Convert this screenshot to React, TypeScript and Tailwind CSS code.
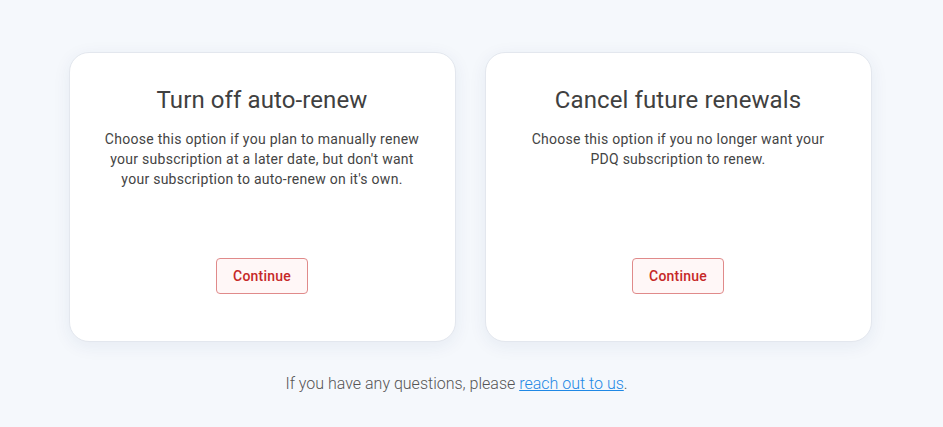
import React from 'react';

interface OptionCardProps {
  title: string;
  text: React.ReactNode;
}

const OptionCard: React.FC<OptionCardProps> = ({ title, text }) => {
  return (
    <div className="w-[387px] h-[290px] bg-white rounded-[20px] border border-[#e3e7ee] shadow-[0_4px_18px_rgba(30,60,110,0.07)] flex flex-col items-center px-6 pt-[31px] pb-[48px]">
      <h2 className="text-[24px] leading-[32px] text-[#404040] font-normal tracking-[0.1px]">{title}</h2>
      <p className="mt-[13px] text-[14px] leading-[20px] text-[#444] text-center tracking-[0.27px]">{text}</p>
      <button className="mt-auto mb-[-1px] h-[36px] w-[92px] rounded-[4px] border border-[#e08a8a] bg-[#fff7f7] text-[14px] font-medium text-[#c62828] tracking-[0.2px]">
        Continue
      </button>
    </div>
  );
};

export default function App() {
  return (
    <div className="min-h-[427px] bg-[#f5f8fc] font-['Roboto','Liberation_Sans',sans-serif] pt-[52px]">
      <div className="flex justify-center gap-[29px] pr-[3px]">
        <OptionCard
          title="Turn off auto-renew"
          text={
            <>
              Choose this option if you plan to manually renew
              <br />
              your subscription at a later date, but don't want
              <br />
              your subscription to auto-renew on it's own.
            </>
          }
        />
        <OptionCard
          title="Cancel future renewals"
          text={
            <>
              Choose this option if you no longer want your
              <br />
              PDQ subscription to renew.
            </>
          }
        />
      </div>
      <p className="mt-[30px] pr-[30px] text-center text-[16px] leading-[24px] font-light text-[#555]">
        If you have any questions, please{' '}
        <a href="#" className="text-[#1e88e5] underline">
          reach out to us
        </a>
        .
      </p>
    </div>
  );
}
